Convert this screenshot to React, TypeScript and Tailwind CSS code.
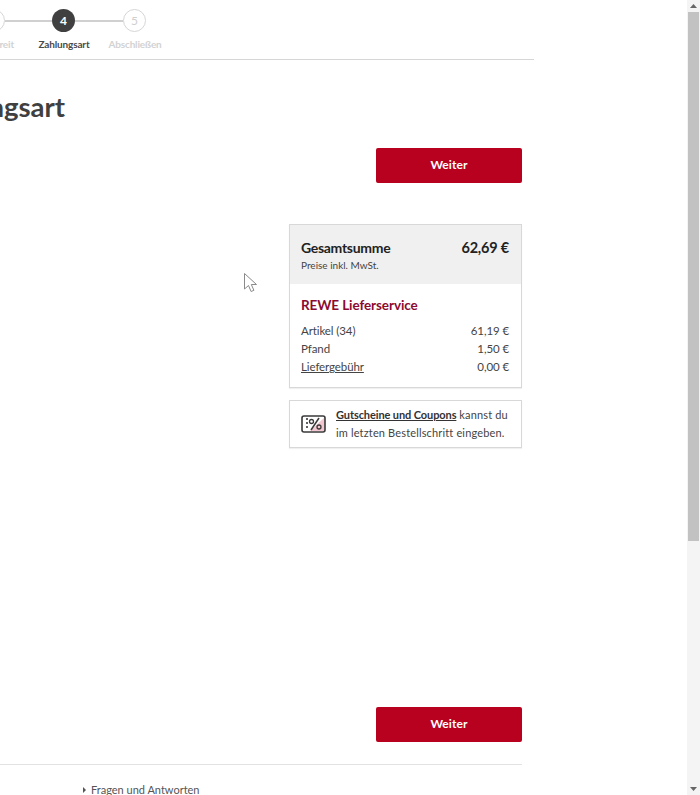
import React from "react";

const font = { fontFamily: '"Lato", "Liberation Sans", sans-serif' };

const PayButton = () => (
  <button className="w-[146px] h-[35px] pb-[1px] bg-[#b8001f] rounded-[2px] text-white text-[12px] font-bold tracking-[0.1px]">
    Weiter
  </button>
);

const CouponIcon = () => (
  <svg width="26" height="20" viewBox="0 0 26 20" fill="none" className="shrink-0">
    <path d="M24 3v14H9z" fill="#f4c6d0" />
    <rect x="1" y="2" width="23" height="16" rx="2" stroke="#3a3a3a" strokeWidth="1.6" />
    <path d="M6 4v12" stroke="#3a3a3a" strokeWidth="1.6" strokeDasharray="2 2" />
    <path d="M10 16L18 4" stroke="#3a3a3a" strokeWidth="1.5" />
    <circle cx="10.5" cy="7.5" r="2" stroke="#3a3a3a" strokeWidth="1.3" />
    <circle cx="18" cy="13" r="2" stroke="#3a3a3a" strokeWidth="1.3" />
  </svg>
);

const App = () => {
  return (
    <div className="flex h-[795px] w-[700px] overflow-hidden bg-white text-[#3c3c3c]" style={font}>
      <main className="relative w-[687px] shrink-0 overflow-hidden">
        {/* Stepper */}
        <div className="w-[534px] h-[60px] pt-[9px] border-b border-[#d6d6d6]">
          <div className="flex items-center h-[23px]">
            <div className="w-[5px] h-[23px] shrink-0 overflow-hidden flex justify-end">
              <div className="w-[23px] h-[23px] shrink-0 rounded-full border-[1.5px] border-[#d6d6d6]"></div>
            </div>
            <div className="w-[47px] h-[2px] bg-[#d0d0d0]"></div>
            <div className="w-[23px] h-[23px] rounded-full bg-[#404040] text-white text-[12px] font-bold flex items-center justify-center">4</div>
            <div className="w-[48px] h-[2px] bg-[#d0d0d0]"></div>
            <div className="w-[23px] h-[23px] rounded-full border-[1.5px] border-[#d6d6d6] text-[#cfcfcf] text-[12px] flex items-center justify-center">5</div>
          </div>
          <div className="flex items-center mt-[5px] text-[10px] leading-[14px] font-bold tracking-[-0.15px] whitespace-nowrap">
            <div className="w-[14px] flex justify-end text-[#d2d2d2]">Bereit</div>
            <div className="w-[52px] ml-[24px] flex justify-center text-[#4a4a4a]">Zahlungsart</div>
            <div className="w-[52px] ml-[19px] flex justify-center text-[#d2d2d2]">Abschließen</div>
          </div>
        </div>

        <h1 className="w-[65px] mt-[29px] flex justify-end whitespace-nowrap text-[27.5px] leading-[36px] font-bold text-[#404040]">
          Zahlungsart
        </h1>

        <div className="w-[522px] flex justify-end mt-[23px]">
          <PayButton />
        </div>

        {/* Summary */}
        <div className="w-[522px] flex justify-end mt-[41px]">
          <div className="w-[233px]">
            <div className="border border-[#d8d8d8] shadow-[0_1px_1px_rgba(0,0,0,0.06)]">
              <div className="h-[59px] bg-[#f0f0f0] pl-[11px] pr-[12px] pt-[13px]">
                <div className="flex justify-between text-[14px] leading-[20px] font-bold text-[#222]">
                  <span className="tracking-[-0.3px]">Gesamtsumme</span>
                  <span className="text-[14.5px] tracking-[-0.2px]">62,69 €</span>
                </div>
                <div className="text-[10px] leading-[14px] text-[#444]">Preise inkl. MwSt.</div>
              </div>
              <div className="h-[103px] pl-[11px] pr-[12px] pt-[12px]">
                <div className="text-[13.5px] leading-[19px] font-bold text-[#8c0a30] tracking-[-0.1px]">REWE Lieferservice</div>
                <div className="mt-[7px] text-[11.5px] leading-[18px] text-[#444] tracking-[-0.1px]">
                  <div className="flex justify-between"><span>Artikel (34)</span><span>61,19 €</span></div>
                  <div className="flex justify-between"><span>Pfand</span><span>1,50 €</span></div>
                  <div className="flex justify-between"><span className="underline">Liefergebühr</span><span>0,00 €</span></div>
                </div>
              </div>
            </div>

            <div className="h-[48px] mt-[12px] border border-[#d8d8d8] shadow-[0_1px_1px_rgba(0,0,0,0.06)] flex items-center pl-[11px]">
              <CouponIcon />
              <p className="ml-[9px] text-[11px] leading-[18px] text-[#444] tracking-[0.15px] whitespace-nowrap">
                <span className="underline font-bold tracking-[-0.1px] text-[#333]">Gutscheine und Coupons</span> kannst du
                <br />
                im letzten Bestellschritt eingeben.
              </p>
            </div>
          </div>
        </div>

        <div className="w-[522px] flex justify-end mt-[259px]">
          <PayButton />
        </div>

        <div className="w-[522px] border-t border-[#e2e2e2] mt-[22px] pl-[83px] pt-[18px] flex items-center text-[11px] leading-[14px] text-[#555]">
          <svg width="3" height="6" viewBox="0 0 3 6" className="mr-[5px]"><path d="M0 0l3 3-3 3z" fill="#555" /></svg>
          Fragen und Antworten
        </div>

        {/* Mouse pointer from the recording */}
        <svg width="16" height="22" viewBox="0 0 16 22" className="absolute left-[243px] top-[272px]" fill="#fff" stroke="#8a8a8a" strokeWidth="1">
          <path d="M1.5 1.5v15.5l4-3.5 2.6 6 2.8-1.2-2.6-5.8h5.2z" />
        </svg>
      </main>

      {/* Scrollbar */}
      <aside className="w-[13px] shrink-0 bg-[#f4f4f4] flex flex-col items-center">
        <svg width="7" height="12" viewBox="0 0 7 12"><path d="M3.5 4L7 8H0z" fill="#666" /></svg>
        <div className="w-[11px] h-[529px] bg-[#c2c2c2]"></div>
        <div className="flex-1"></div>
        <svg width="7" height="12" viewBox="0 0 7 12"><path d="M3.5 8L0 4h7z" fill="#666" /></svg>
      </aside>
    </div>
  );
};

export default App;
